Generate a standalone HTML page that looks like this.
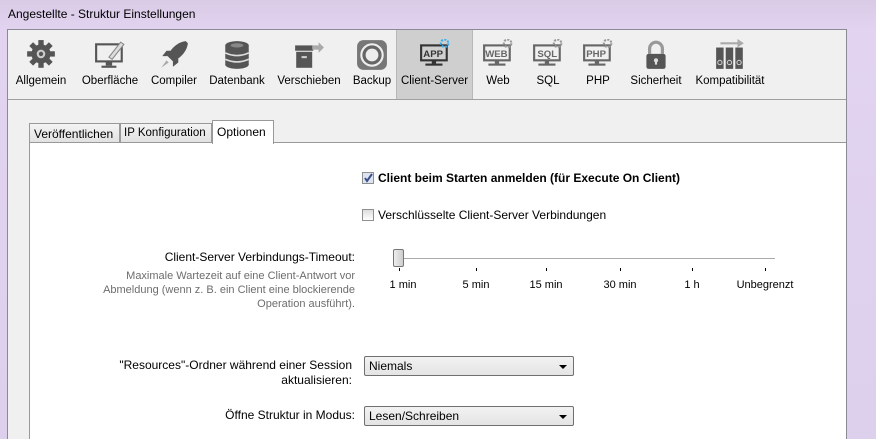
<!DOCTYPE html>
<html><head><meta charset="utf-8"><style>
*{margin:0;padding:0;box-sizing:border-box}
html,body{width:876px;height:439px;overflow:hidden}
body{font-family:"Liberation Sans",sans-serif;font-size:12px;color:#000;position:relative;background:linear-gradient(180deg,#d9cbe6,#e2d4f0 30px,#dcd0ec);}
.title{position:absolute;left:8px;top:7px;font-size:12px;color:#000}
.win{position:absolute;left:7px;top:29px;width:840px;height:410px;background:#f0f0f0;border:1px solid #8a8a94;border-bottom:none;overflow:hidden}
.tb{position:absolute;left:0;top:0;width:838px;height:70px;border-bottom:1px solid #a0a0a0}
.it{position:absolute;top:0;height:69px;text-align:center}
.it span{position:absolute;bottom:12px;left:0;right:0;font-size:11.5px;white-space:nowrap}
.it svg{position:absolute;left:50%;top:9px;margin-left:-16px;width:32px;height:32px}
.sel{background:#cfcfcf;border-left:1px solid #b8b8b8;border-right:1px solid #b8b8b8}
.tab{position:absolute;top:93px;height:20px;border:1px solid #999;background:linear-gradient(#f4f4f4,#e2e2e2);font-size:12px;padding:3px 4px 0;white-space:nowrap;overflow:hidden}
.panel{position:absolute;left:21px;top:112px;width:818px;height:298px;background:#fff;border:1px solid #999;border-bottom:none}
.cb{position:absolute;width:12px;height:12px;border:1px solid #8e8f8f;background:linear-gradient(#ddd,#fff)}
.lbl{position:absolute;text-align:right;white-space:nowrap}
.gray{color:#6d6d6d;font-size:11px;line-height:14px}
.sel2{position:absolute;width:210px;height:20px;border:1px solid #707070;border-radius:2px;background:linear-gradient(#f2f2f2,#e4e4e4);padding:2px 4px;font-size:12px}
.sel2:after{content:"";position:absolute;right:6px;top:8px;border-left:4px solid transparent;border-right:4px solid transparent;border-top:4px solid #000}
.tick{position:absolute;top:268px;width:1px;height:3px;background:#000}
.tl{position:absolute;top:279px;font-size:11px;transform:translateX(-50%)}
</style></head><body>
<div class="title">Angestellte - Struktur Einstellungen</div>
<div class="win">
<div class="tb">
 <div class="it" style="left:5px;width:56px"><svg viewBox="0 0 30 30"><g transform="translate(15,14)" fill="#555"><circle r="9"/><g><rect x="-2.5" y="-13" width="5" height="26"/><rect x="-13" y="-2.5" width="26" height="5"/><rect x="-2.5" y="-13" width="5" height="26" transform="rotate(45)"/><rect x="-2.5" y="-13" width="5" height="26" transform="rotate(-45)"/></g><circle r="4" fill="#ccc"/><circle r="2" fill="#555"/></g></svg><span>Allgemein</span></div>
 <div class="it" style="left:70px;width:64px"><svg viewBox="0 0 30 30"><rect x="2" y="5" width="24" height="16" fill="none" stroke="#555" stroke-width="2"/><rect x="11" y="21" width="6" height="4" fill="#555"/><rect x="7" y="25" width="14" height="2" fill="#555"/><path d="M14 17 L25 3 L28 5 L17 19 Z" fill="#ddd" stroke="#888"/></svg><span>Oberfläche</span></div>
 <div class="it" style="left:140px;width:52px"><svg viewBox="0 0 30 30"><path d="M26 2 C18 3 12 9 9 16 L14 21 C21 18 27 12 28 4 Z" fill="#555"/><path d="M9 16 L4 16 L8 11 L12 11 Z M14 21 L14 26 L19 22 L19 18Z" fill="#555"/><path d="M8 20 L3 27 L10 22Z" fill="#aaa"/></svg><span>Compiler</span></div>
 <div class="it" style="left:198px;width:62px"><svg viewBox="0 0 30 30"><ellipse cx="15" cy="6" rx="11" ry="4" fill="#555"/><rect x="4" y="6" width="22" height="18" fill="#555"/><ellipse cx="15" cy="24" rx="11" ry="4" fill="#555"/><path d="M4 13 Q15 18 26 13 M4 19 Q15 24 26 19" stroke="#ddd" fill="none" stroke-width="1.5"/><ellipse cx="15" cy="6" rx="6" ry="2" fill="#888"/></svg><span>Datenbank</span></div>
 <div class="it" style="left:266px;width:70px"><svg viewBox="0 0 30 30"><rect x="2" y="6" width="17" height="5" fill="#555"/><rect x="3" y="12" width="15" height="15" fill="#555"/><rect x="8" y="16" width="5" height="2" fill="#ccc"/><path d="M18 6 L24 6 L24 3 L29 8 L24 13 L24 10 L18 10Z" fill="#aaa"/></svg><span>Verschieben</span></div>
 <div class="it" style="left:340px;width:48px"><svg viewBox="0 0 30 30"><rect x="1" y="1" width="28" height="28" rx="6" fill="#777"/><circle cx="15" cy="15" r="11" fill="#eee"/><circle cx="15" cy="15" r="9" fill="#666"/><circle cx="15" cy="15" r="6" fill="#eee"/></svg><span>Backup</span></div>
 <div class="it sel" style="left:388px;width:77px"><svg viewBox="0 0 30 30"><rect x="2" y="6" width="24" height="14" fill="none" stroke="#333" stroke-width="2"/><text x="4" y="17" font-size="9" font-weight="bold" fill="#333" font-family="Liberation Sans">APP</text><rect x="12" y="20" width="4" height="3" fill="#333"/><rect x="6" y="23" width="16" height="2" fill="#333"/><circle cx="24" cy="4" r="3.5" fill="none" stroke="#3ab0f0" stroke-width="2" stroke-dasharray="2 1.2"/></svg><span>Client-Server</span></div>
 <div class="it" style="left:470px;width:40px"><svg viewBox="0 0 30 30"><rect x="2" y="6" width="24" height="14" fill="none" stroke="#666" stroke-width="2"/><text x="3" y="17" font-size="9" font-weight="bold" fill="#666" font-family="Liberation Sans">WEB</text><rect x="12" y="20" width="4" height="3" fill="#666"/><rect x="6" y="23" width="16" height="2" fill="#666"/><circle cx="24" cy="4" r="3.5" fill="none" stroke="#999" stroke-width="2" stroke-dasharray="2 1.2"/></svg><span>Web</span></div>
 <div class="it" style="left:520px;width:40px"><svg viewBox="0 0 30 30"><rect x="2" y="6" width="24" height="14" fill="none" stroke="#666" stroke-width="2"/><text x="5" y="17" font-size="9" font-weight="bold" fill="#666" font-family="Liberation Sans">SQL</text><rect x="12" y="20" width="4" height="3" fill="#666"/><rect x="6" y="23" width="16" height="2" fill="#666"/><circle cx="24" cy="4" r="3.5" fill="none" stroke="#999" stroke-width="2" stroke-dasharray="2 1.2"/></svg><span>SQL</span></div>
 <div class="it" style="left:570px;width:40px"><svg viewBox="0 0 30 30"><rect x="2" y="6" width="24" height="14" fill="none" stroke="#666" stroke-width="2"/><text x="4" y="17" font-size="9" font-weight="bold" fill="#666" font-family="Liberation Sans">PHP</text><rect x="12" y="20" width="4" height="3" fill="#666"/><rect x="6" y="23" width="16" height="2" fill="#666"/><circle cx="24" cy="4" r="3.5" fill="none" stroke="#999" stroke-width="2" stroke-dasharray="2 1.2"/></svg><span>PHP</span></div>
 <div class="it" style="left:620px;width:56px"><svg viewBox="0 0 30 30"><path d="M9 14 V9 a6 6 0 0 1 12 0 V14" fill="none" stroke="#999" stroke-width="3"/><rect x="6" y="14" width="18" height="14" rx="2" fill="#555"/><circle cx="15" cy="20" r="2" fill="#ddd"/><rect x="14" y="20" width="2" height="4" fill="#ddd"/></svg><span>Sicherheit</span></div>
 <div class="it" style="left:682px;width:80px"><svg viewBox="0 0 30 30"><path d="M6 3 H22 V0 L28 4 L22 8 V5 H6Z" fill="#aaa"/><rect x="2" y="8" width="7" height="20" fill="#555"/><rect x="11" y="8" width="7" height="20" fill="#555"/><rect x="20" y="8" width="7" height="20" fill="#555"/><g fill="none" stroke="#ccc"><circle cx="5.5" cy="22" r="2"/><circle cx="14.5" cy="22" r="2"/><circle cx="23.5" cy="22" r="2"/></g></svg><span>Kompatibilität</span></div>
</div>
<div class="tab" style="left:21px;width:91px">Veröffentlichen</div>
<div class="tab" style="left:112px;width:92px;font-size:11.5px;padding-left:3px">IP Konfiguration</div>
<div class="panel"></div>
<div class="tab" style="left:204px;top:90px;height:24px;width:62px;background:#fff;border-bottom:none;padding-top:4px;z-index:2">Optionen</div>
</div>
<div class="cb" style="left:362px;top:172px;background:#dde4f0"><svg width="10" height="10" style="position:absolute;left:0;top:0"><path d="M2 5 L4 8 L9 1" stroke="#3a4e8a" stroke-width="2" fill="none"/></svg></div>
<div style="position:absolute;left:378px;top:171px;font-weight:bold">Client beim Starten anmelden (für Execute On Client)</div>
<div class="cb" style="left:362px;top:209px"></div>
<div style="position:absolute;left:378px;top:208px">Verschlüsselte Client-Server Verbindungen</div>
<div class="lbl" style="right:521px;top:250px">Client-Server Verbindungs-Timeout:</div>
<div class="lbl gray" style="right:521px;top:269px">Maximale Wartezeit auf eine Client-Antwort vor<br>Abmeldung (wenn z. B. ein Client eine blockierende<br>Operation ausführt).</div>
<div style="position:absolute;left:398px;top:258px;width:377px;height:1px;background:#aaa"></div>
<div style="position:absolute;left:393px;top:249px;width:11px;height:18px;border:1px solid #777;border-radius:2px;background:linear-gradient(90deg,#eee,#ccc)"></div>
<div class="tick" style="left:399px"></div><div class="tick" style="left:476px"></div><div class="tick" style="left:546px"></div><div class="tick" style="left:620px"></div><div class="tick" style="left:692px"></div><div class="tick" style="left:765px"></div>
<div class="tl" style="left:403px">1 min</div><div class="tl" style="left:476px">5 min</div><div class="tl" style="left:546px">15 min</div><div class="tl" style="left:620px">30 min</div><div class="tl" style="left:692px">1 h</div><div class="tl" style="left:765px">Unbegrenzt</div>
<div class="lbl" style="right:524px;top:358px;line-height:15px">"Resources"-Ordner während einer Session<br>aktualisieren:</div>
<div class="sel2" style="left:364px;top:356px">Niemals</div>
<div class="lbl" style="right:521px;top:408px">Öffne Struktur in Modus:</div>
<div class="sel2" style="left:364px;top:406px">Lesen/Schreiben</div>
</body></html>
